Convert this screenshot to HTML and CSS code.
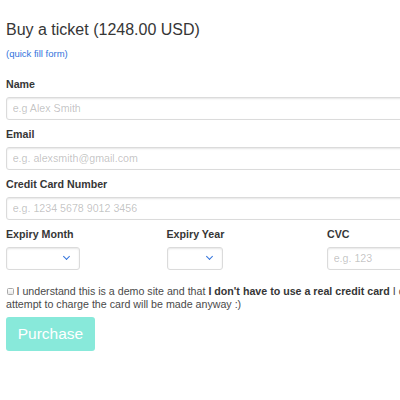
FILE: index.html
```html
<!DOCTYPE html>
<html lang="en">
<head>
<meta charset="utf-8">
<title>Buy a ticket</title>
<link rel="stylesheet" href="styles.css">
</head>
<body>
<main class="page">
  <h1 class="title">Buy a ticket (1248.00 USD)</h1>
  <a class="quick-fill" href="#">(quick fill form)</a>
  <form class="form">
    <div class="field">
      <label class="label">Name</label>
      <input class="input" type="text" placeholder="e.g Alex Smith">
    </div>
    <div class="field">
      <label class="label">Email</label>
      <input class="input" type="email" placeholder="e.g. alexsmith@gmail.com">
    </div>
    <div class="field">
      <label class="label">Credit Card Number</label>
      <input class="input" type="text" placeholder="e.g. 1234 5678 9012 3456">
    </div>
    <div class="columns">
      <div class="field">
        <label class="label">Expiry Month</label>
        <div class="select select-month"><select><option></option></select></div>
      </div>
      <div class="field">
        <label class="label">Expiry Year</label>
        <div class="select select-year"><select><option></option></select></div>
      </div>
      <div class="field">
        <label class="label">CVC</label>
        <input class="input" type="text" placeholder="e.g. 123">
      </div>
    </div>
    <label class="checkbox"><input type="checkbox"> I understand this is a demo site and that <strong>I don't have to use a real credit card</strong> I don't need to worry, no<br>attempt to charge the card will be made anyway :)</label>
    <button class="button" type="button">Purchase</button>
  </form>
</main>
</body>
</html>
```

FILE: styles.css
```css
html {
  overflow: hidden;
}

body {
  margin: 0;
  font-family: "Liberation Sans", Arial, sans-serif;
  font-size: 10.67px;
  color: #4a4a4a;
  background: #fff;
}

.page {
  width: 482px;
  padding: 20.5px 0 0 6px;
}

.title {
  margin: 0;
  font-size: 16px;
  line-height: 18px;
  font-weight: 400;
  color: #363636;
}

.quick-fill {
  display: block;
  margin-top: 8.5px;
  font-size: 9.5px;
  line-height: 14px;
  color: #3273dc;
  text-decoration: none;
}

.form {
  margin-top: 16px;
}

.field {
  margin-bottom: 7.5px;
}

.label {
  display: block;
  font-weight: 700;
  color: #363636;
  font-size: 10.67px;
  line-height: 15px;
  margin-bottom: 4.5px;
}

.input {
  display: block;
  box-sizing: border-box;
  width: 100%;
  height: 23px;
  margin: 0;
  padding: 0 5.67px;
  border: 1px solid #dbdbdb;
  border-radius: 3px;
  box-shadow: inset 0 1px 2px rgba(10, 10, 10, 0.1);
  font-family: inherit;
  font-size: 10.67px;
  color: #363636;
  background: #fff;
}

.input::placeholder {
  color: rgba(54, 54, 54, 0.3);
}

.columns {
  display: grid;
  grid-template-columns: repeat(3, 160.5px);
  margin-bottom: 7.5px;
}

.select {
  position: relative;
  display: block;
  height: 23px;
}

.select-month {
  width: 74px;
}

.select-year {
  width: 56.5px;
}

.select select {
  appearance: none;
  -webkit-appearance: none;
  box-sizing: border-box;
  width: 100%;
  height: 23px;
  margin: 0;
  border: 1px solid #dbdbdb;
  border-radius: 3px;
  box-shadow: inset 0 1px 2px rgba(10, 10, 10, 0.1);
  background: #fff;
  font-family: inherit;
  font-size: 10.67px;
}

.select::after {
  content: "";
  position: absolute;
  right: 10.8px;
  top: 50%;
  margin-top: -4.5px;
  width: 5px;
  height: 5px;
  border: 1px solid #3273dc;
  border-top: 0;
  border-right: 0;
  box-sizing: border-box;
  transform: rotate(-45deg);
  pointer-events: none;
}

.checkbox {
  display: block;
  font-size: 10.67px;
  line-height: 13px;
  color: #4a4a4a;
  white-space: nowrap;
}

.checkbox strong {
  color: #363636;
  font-weight: 700;
}

.checkbox input {
  appearance: none;
  -webkit-appearance: none;
  box-sizing: border-box;
  display: inline-block;
  width: 7px;
  height: 7px;
  margin: 0 0 0 0.5px;
  border: 1px solid #a9a9a9;
  border-radius: 1.5px;
  background: linear-gradient(#ffffff, #e6e6e6);
  vertical-align: -0.5px;
}

.button {
  display: block;
  margin-top: 6.5px;
  width: 89px;
  height: 34px;
  padding: 0 11px;
  border: 0;
  border-radius: 3px;
  background: #88e9da;
  color: #fff;
  font-family: inherit;
  font-size: 15.5px;
  text-align: center;
}
```
